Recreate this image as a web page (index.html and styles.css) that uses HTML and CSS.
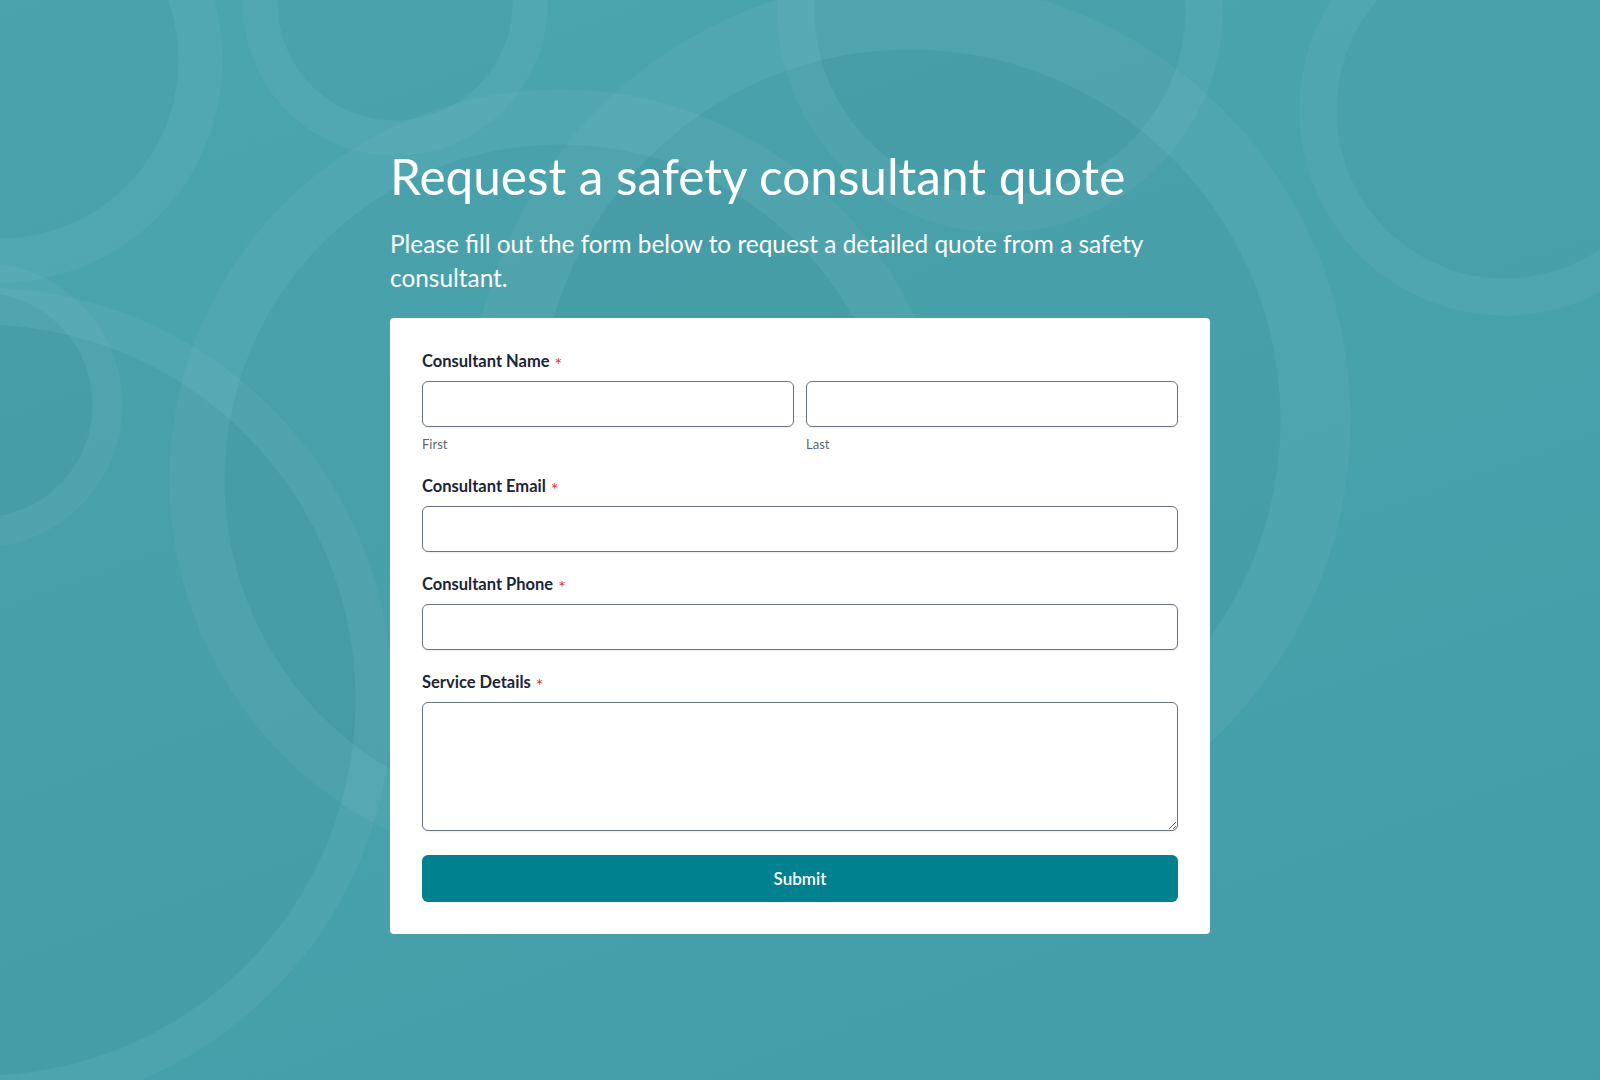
FILE: index.html
```html
<!DOCTYPE html>
<html lang="en">
<head>
<meta charset="utf-8">
<title>Request a safety consultant quote</title>
<link rel="stylesheet" href="styles.css">
</head>
<body>
<main class="page">
  <section class="wrap">
    <h1 class="title">Request a safety consultant quote</h1>
    <p class="intro">Please fill out the form below to request a detailed quote from a safety consultant.</p>

    <form class="card">
      <div class="field">
        <label class="label">Consultant Name <span class="req">*</span></label>
        <div class="name-row">
          <div class="name-col">
            <input class="input" type="text" aria-label="First">
            <span class="hint">First</span>
          </div>
          <div class="name-col">
            <input class="input" type="text" aria-label="Last">
            <span class="hint">Last</span>
          </div>
        </div>
      </div>

      <div class="field">
        <label class="label">Consultant Email <span class="req">*</span></label>
        <input class="input" type="email">
      </div>

      <div class="field">
        <label class="label">Consultant Phone <span class="req">*</span></label>
        <input class="input" type="tel">
      </div>

      <div class="field">
        <label class="label">Service Details <span class="req">*</span></label>
        <textarea class="input textarea"></textarea>
      </div>

      <button class="submit" type="button">Submit</button>
    </form>
  </section>
</main>
</body>
</html>
```

FILE: styles.css
```css
* {
  box-sizing: border-box;
}

html,
body {
  margin: 0;
  padding: 0;
}

body {
  font-family: Lato, "Noto Sans", "Liberation Sans", sans-serif;
  color: #1e293b;
  min-height: 100vh;
  /* decorative rings over a soft teal gradient */
  background-color: #47a1ab;
  background-image:
    radial-gradient(circle at 395px 3px, rgba(0,0,0,.015) 117px, rgba(255,255,255,.04) 118px, rgba(255,255,255,.04) 152px, transparent 153px),
    radial-gradient(circle at 0px 60px, rgba(0,0,0,.015) 178px, rgba(255,255,255,.04) 179px, rgba(255,255,255,.04) 222px, transparent 223px),
    radial-gradient(circle at -20px 405px, rgba(0,0,0,.015) 112px, rgba(255,255,255,.04) 113px, rgba(255,255,255,.04) 142px, transparent 143px),
    radial-gradient(circle at -20px 700px, rgba(0,0,0,.02) 375px, rgba(255,255,255,.04) 376px, rgba(255,255,255,.04) 412px, transparent 413px),
    radial-gradient(circle at 560px 480px, rgba(0,0,0,.015) 335px, rgba(255,255,255,.04) 336px, rgba(255,255,255,.04) 390px, transparent 391px),
    radial-gradient(circle at 910px 420px, rgba(0,0,0,.02) 370px, rgba(255,255,255,.04) 371px, rgba(255,255,255,.04) 440px, transparent 441px),
    radial-gradient(circle at 1505px 110px, rgba(0,0,0,.01) 168px, rgba(255,255,255,.04) 169px, rgba(255,255,255,.04) 205px, transparent 206px),
    radial-gradient(circle at 1000px 10px, rgba(0,0,0,.015) 185px, rgba(255,255,255,.04) 186px, rgba(255,255,255,.04) 222px, transparent 223px),
    linear-gradient(160deg, #4ba5af 0%, #48a2ac 45%, #429da9 100%);
  background-repeat: no-repeat;
}

.page {
  min-height: 100vh;
  display: flex;
  justify-content: center;
  padding: 147px 0 146px;
}

.wrap {
  width: 820px;
}

.title {
  margin: 0;
  font-size: 49.5px;
  line-height: 58px;
  font-weight: 400;
  color: #ffffff;
}

.intro {
  margin: 22px 0 23px;
  font-size: 24.4px;
  line-height: 34px;
  font-weight: 400;
  color: #ffffff;
}

.card {
  background: #ffffff;
  border-radius: 4px;
  padding: 32px;
  display: flex;
  flex-direction: column;
  gap: 21px;
}

.field {
  display: flex;
  flex-direction: column;
}

.label {
  font-size: 16.5px;
  line-height: 23px;
  height: 23px;
  font-weight: 700;
  color: #1b2537;
  margin-bottom: 8px;
}

.req {
  color: #d9352b;
  font-size: 18px;
  line-height: 0;
  font-weight: 400;
  margin-left: 1px;
  vertical-align: -4px;
}

.name-row {
  display: grid;
  grid-template-columns: 1fr 1fr;
  gap: 12px;
}

.name-col {
  display: flex;
  flex-direction: column;
}

.input {
  display: block;
  width: 100%;
  height: 46px;
  border: 1px solid #6b7280;
  border-radius: 6px;
  background: #ffffff;
  box-shadow: 0 1px 2px rgba(15, 23, 42, 0.08);
  font-family: inherit;
  font-size: 16px;
  padding: 0 12px;
  margin: 0;
}

.textarea {
  height: 129px;
  padding: 10px 12px;
  resize: vertical;
}

.hint {
  margin-top: 8px;
  font-size: 13px;
  line-height: 19px;
  color: #5f6672;
}

.submit {
  margin-top: 3px;
  height: 47px;
  border: 0;
  border-radius: 6px;
  background: #00818f;
  color: #ffffff;
  font-family: inherit;
  font-size: 17px;
  font-weight: 600;
  cursor: pointer;
}
```
